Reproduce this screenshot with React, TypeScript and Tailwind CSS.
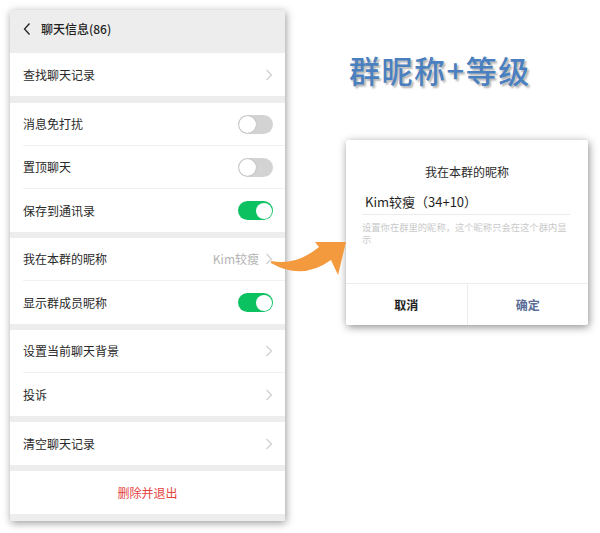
import React from "react";

const FONT = { fontFamily: '"Noto Sans CJK SC", "Noto Sans", sans-serif' };

function Chevron() {
  return (
    <svg width="8" height="12" viewBox="0 0 8 12" className="shrink-0">
      <polyline points="1.5,1 6.5,6 1.5,11" fill="none" stroke="#cfcfd3" strokeWidth="1.2" />
    </svg>
  );
}

function Toggle({ on }: { on: boolean }) {
  return on ? (
    <div className="flex h-[19px] w-[35px] items-center justify-end rounded-full bg-[#0cc160] px-[1.5px]">
      <div className="h-[16px] w-[16px] rounded-full bg-white" />
    </div>
  ) : (
    <div className="flex h-[19px] w-[35px] items-center rounded-full bg-[#d3d3d3] px-[1px]">
      <div className="h-[17px] w-[17px] rounded-full bg-white shadow-[0_0_1px_rgba(0,0,0,0.4)]" />
    </div>
  );
}

type Row = { label: string; right?: "chevron" | "on" | "off"; value?: string };

function Group({ rows }: { rows: Row[] }) {
  return (
    <div className="bg-white">
      {rows.map((row, idx) => (
        <div key={row.label} className="h-[43px] pl-[13px]">
          <div
            className={`flex h-full items-center pr-[12px] ${
              idx < rows.length - 1 ? "border-b border-[#f0f0f0]" : ""
            }`}
          >
            <span className="flex-1 text-[12px] text-[#2a2a2a]">{row.label}</span>
            {row.value && <span className="mr-[6px] text-[12px] text-[#b3b3b3]">{row.value}</span>}
            {row.right === "chevron" && <Chevron />}
            {row.right === "on" && <Toggle on />}
            {row.right === "off" && <Toggle on={false} />}
          </div>
        </div>
      ))}
    </div>
  );
}

function Phone() {
  return (
    <div className="ml-[10px] mt-[10px] flex w-[275px] flex-col bg-[#ededed] shadow-[1px_2px_8px_rgba(0,0,0,0.4)]">
      {/* header */}
      <div className="flex h-[38px] items-center pl-[12px]">
        <svg width="10" height="14" viewBox="0 0 10 14">
          <polyline points="7.5,1.5 2.5,7 7.5,12.5" fill="none" stroke="#222" strokeWidth="1.3" />
        </svg>
        <span className="ml-[9px] text-[12px] font-medium text-[#1f1f1f]">聊天信息(86)</span>
      </div>
      <div className="h-[5px]" />
      <Group rows={[{ label: "查找聊天记录", right: "chevron" }]} />
      <div className="h-[7px]" />
      <Group
        rows={[
          { label: "消息免打扰", right: "off" },
          { label: "置顶聊天", right: "off" },
          { label: "保存到通讯录", right: "on" },
        ]}
      />
      <div className="h-[6px]" />
      <Group
        rows={[
          { label: "我在本群的昵称", right: "chevron", value: "Kim较瘦" },
          { label: "显示群成员昵称", right: "on" },
        ]}
      />
      <div className="h-[6px]" />
      <Group
        rows={[
          { label: "设置当前聊天背景", right: "chevron" },
          { label: "投诉", right: "chevron" },
        ]}
      />
      <div className="h-[6px]" />
      <Group rows={[{ label: "清空聊天记录", right: "chevron" }]} />
      <div className="h-[6px]" />
      <div className="flex h-[43px] items-center justify-center bg-white text-[12px] text-[#e64340]">
        删除并退出
      </div>
      <div className="h-[7px]" />
    </div>
  );
}

function Dialog() {
  return (
    <div className="flex h-[185px] w-[242px] flex-col rounded-[2px] bg-white shadow-[1px_2px_8px_rgba(0,0,0,0.45)]">
      <div className="pt-[23px] text-center text-[12px] text-[#2b2b2b]">我在本群的昵称</div>
      <div className="ml-[16px] mr-[18px] mt-[11px] border-b border-[#ececec] pb-[2px] pl-[3px] text-[13px] text-[#1f1f1f]">
        Kim较瘦（34+10）
      </div>
      <div className="ml-[16px] mr-[18px] mt-[6px] text-[9.3px] leading-[12px] text-[#c9c9c9]">
        设置你在群里的昵称，这个昵称只会在这个群内显示
      </div>
      <div className="mt-auto flex h-[42px] border-t border-[#ececec]">
        <div className="flex flex-1 items-center justify-center border-r border-[#ececec] text-[12px] font-bold text-[#222]">
          取消
        </div>
        <div className="flex flex-1 items-center justify-center text-[12px] font-bold text-[#576b95]">
          确定
        </div>
      </div>
    </div>
  );
}

function Arrow() {
  return (
    <svg
      width="100"
      height="60"
      viewBox="0 0 100 60"
      className="pointer-events-none absolute left-[260px] top-[230px]"
    >
      <path
        d="M11 31 Q36 36 59 17 L55 12 L86 12 L78 45 L71 30 Q42 51 11 33 Z"
        fill="#f39a3e"
      />
    </svg>
  );
}

export default function App() {
  return (
    <div className="relative h-[533px] w-[600px] overflow-hidden bg-white" style={FONT}>
      <div className="flex">
        <Phone />
        <div className="ml-[61px] flex w-[242px] flex-col">
          <h1 className="ml-[3px] mt-[44px] h-[52px] text-[31px] font-medium leading-[52px] tracking-[1.5px] text-[#4a7fc0] [text-shadow:2px_2px_2px_rgba(0,0,0,0.3)]">
            群昵称+等级
          </h1>
          <div className="mt-[44px]">
            <Dialog />
          </div>
        </div>
      </div>
      <Arrow />
    </div>
  );
}
